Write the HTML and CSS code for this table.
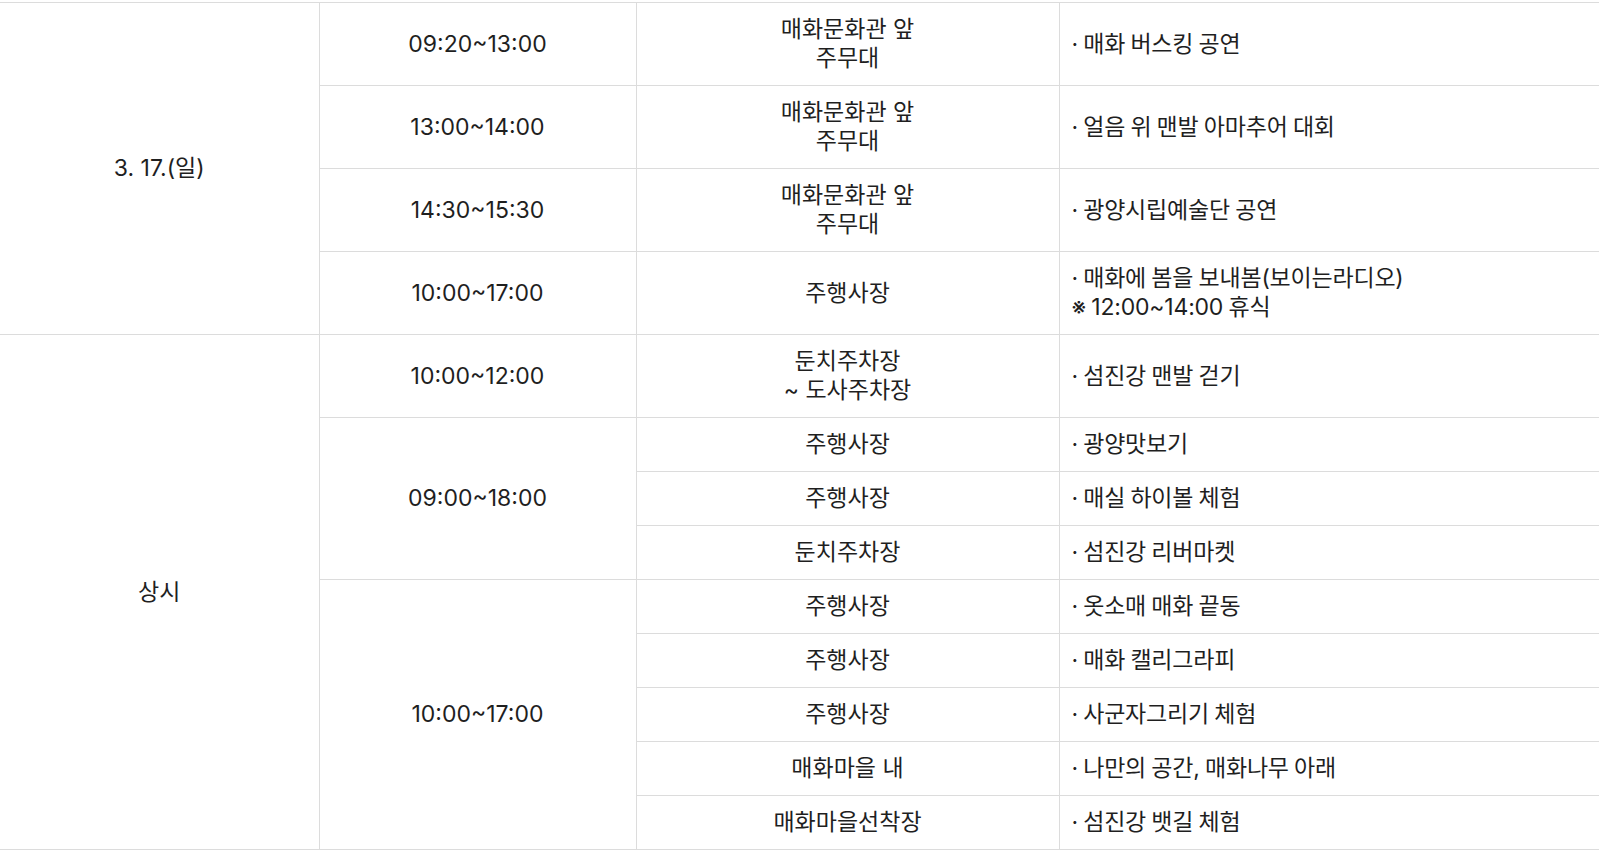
FILE: index.html
```html
<!DOCTYPE html>
<html lang="ko">
<head>
<meta charset="utf-8">
<title>광양매화축제 행사 일정</title>
<link rel="stylesheet" href="styles.css">
</head>
<body>
<div class="wrap">
<table class="sched">
  <colgroup>
    <col class="c-date"><col class="c-time"><col class="c-place"><col class="c-prog">
  </colgroup>
  <tbody>
    <tr class="tall">
      <td class="date" rowspan="4">3. 17.(일)</td>
      <td class="time">09:20~13:00</td>
      <td class="place">매화문화관 앞<br>주무대</td>
      <td class="prog">· 매화 버스킹 공연</td>
    </tr>
    <tr class="tall">
      <td class="time">13:00~14:00</td>
      <td class="place">매화문화관 앞<br>주무대</td>
      <td class="prog">· 얼음 위 맨발 아마추어 대회</td>
    </tr>
    <tr class="tall">
      <td class="time">14:30~15:30</td>
      <td class="place">매화문화관 앞<br>주무대</td>
      <td class="prog">· 광양시립예술단 공연</td>
    </tr>
    <tr class="tall">
      <td class="time">10:00~17:00</td>
      <td class="place">주행사장</td>
      <td class="prog">· 매화에 봄을 보내봄(보이는라디오)<br>※ 12:00~14:00 휴식</td>
    </tr>
    <tr class="tall">
      <td class="date" rowspan="9">상시</td>
      <td class="time">10:00~12:00</td>
      <td class="place">둔치주차장<br>~ 도사주차장</td>
      <td class="prog">· 섬진강 맨발 걷기</td>
    </tr>
    <tr class="short">
      <td class="time" rowspan="3">09:00~18:00</td>
      <td class="place">주행사장</td>
      <td class="prog">· 광양맛보기</td>
    </tr>
    <tr class="short">
      <td class="place">주행사장</td>
      <td class="prog">· 매실 하이볼 체험</td>
    </tr>
    <tr class="short">
      <td class="place">둔치주차장</td>
      <td class="prog">· 섬진강 리버마켓</td>
    </tr>
    <tr class="short">
      <td class="time" rowspan="5">10:00~17:00</td>
      <td class="place">주행사장</td>
      <td class="prog">· 옷소매 매화 끝동</td>
    </tr>
    <tr class="short">
      <td class="place">주행사장</td>
      <td class="prog">· 매화 캘리그라피</td>
    </tr>
    <tr class="short">
      <td class="place">주행사장</td>
      <td class="prog">· 사군자그리기 체험</td>
    </tr>
    <tr class="short">
      <td class="place">매화마을 내</td>
      <td class="prog">· 나만의 공간, 매화나무 아래</td>
    </tr>
    <tr class="short">
      <td class="place">매화마을선착장</td>
      <td class="prog">· 섬진강 뱃길 체험</td>
    </tr>
  </tbody>
</table>
</div>
</body>
</html>
```

FILE: styles.css
```css
html, body {
  margin: 0;
  padding: 0;
  background: #ffffff;
}

.wrap {
  padding-top: 2px;
}

.sched {
  width: 1599px;
  border-collapse: collapse;
  table-layout: fixed;
  font-family: "Inter", "Noto Sans CJK KR", "Noto Sans", sans-serif;
  color: #1f1f1f;
  border-top: 1px solid #dcdcdc;
  border-bottom: 1px solid #dcdcdc;
}

.c-date { width: 319px; }
.c-time { width: 317px; }
.c-place { width: 423px; }
.c-prog { width: 540px; }

.sched td {
  padding: 0;
  border: 1px solid #dcdcdc;
  text-align: center;
  vertical-align: middle;
  font-size: 23px;
  line-height: 29px;
  letter-spacing: 0;
}

.sched td:first-child {
  border-left: none;
}

.sched td.prog {
  border-right: none;
  text-align: left;
  padding-left: 12px;
  letter-spacing: -0.2px;
  word-spacing: -1px;
}

.sched tr.tall {
  height: 83px;
}

.sched tr.short {
  height: 54px;
}
```
